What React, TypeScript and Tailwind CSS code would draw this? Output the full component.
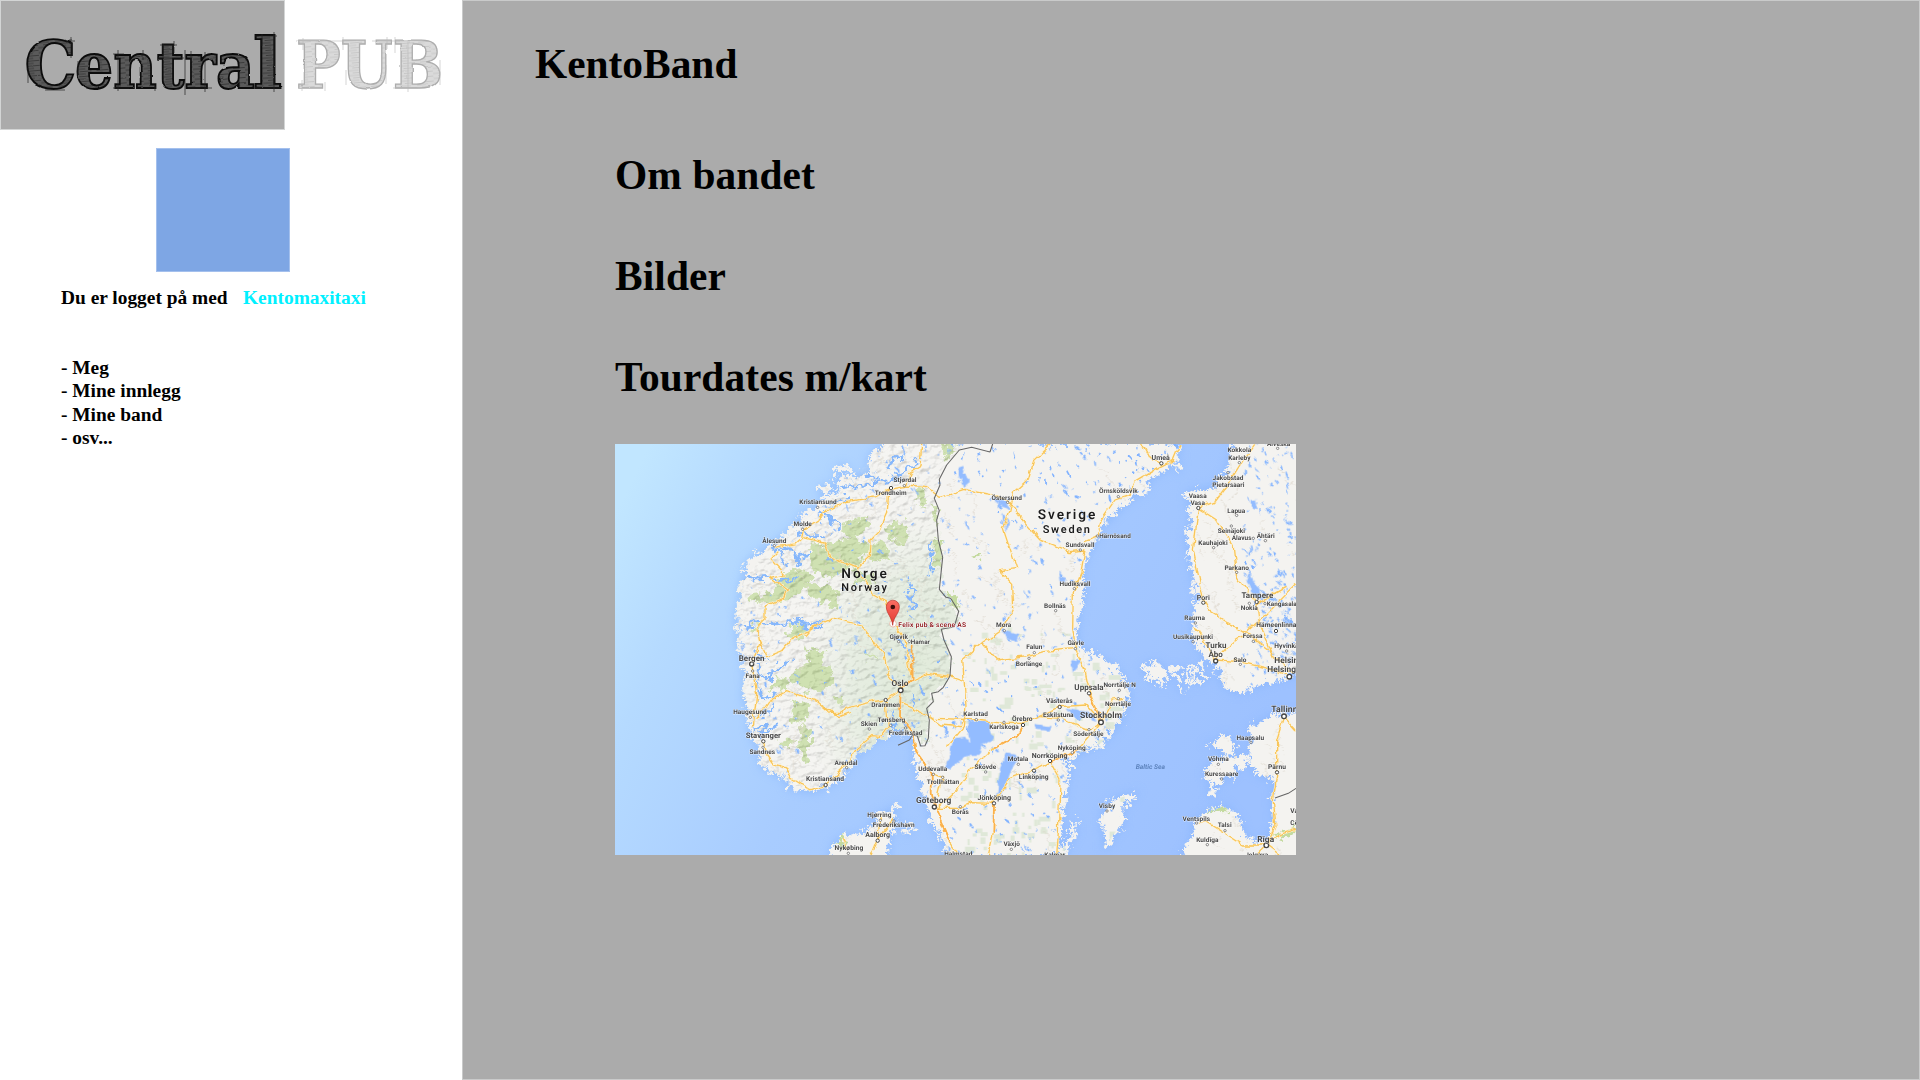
type Label = [number, number, string, number?, ("start" | "end")?];

const land = [
  // Norway and Sweden
  "M822 12 L795 35 L775 65 L795 92 L745 108 L705 148 L655 172 L620 205 L575 228 L555 262 L525 290 L480 318 L440 345 L412 370 L406 402 L392 440 L394 480 L380 520 L384 570 L388 610 L398 640 L408 700 L404 780 L420 810 L420 860 L434 900 L450 930 L454 975 L500 1003 L540 1020 L532 1040 L570 1048 L610 1054 L650 1037 L690 1012 L715 980 L740 945 L780 912 L800 892 L835 885 L853 868 L850 820 L865 812 L872 870 L905 880 L915 920 L918 970 L930 1010 L945 1060 L958 1100 L965 1140 L985 1175 L1005 1210 L1012 1245 L1338 1245 L1345 1210 L1352 1160 L1355 1100 L1367 1030 L1378 975 L1340 962 L1400 945 L1432 925 L1465 915 L1495 890 L1528 850 L1545 800 L1560 765 L1540 720 L1515 680 L1475 660 L1445 640 L1405 628 L1398 590 L1405 510 L1425 450 L1412 400 L1428 350 L1455 300 L1470 262 L1500 235 L1530 205 L1565 172 L1605 150 L1620 115 L1660 92 L1690 65 L1705 30 L1712 12 Z",
  // Finland
  "M1872 12 L1862 60 L1845 105 L1812 145 L1770 150 L1735 160 L1738 195 L1750 235 L1730 285 L1742 350 L1750 410 L1765 470 L1752 540 L1750 585 L1762 615 L1795 655 L1830 690 L1835 730 L1880 758 L1930 742 L1990 718 L2075 700 L2075 0 L1872 0 Z",
  // Estonia and Latvia
  "M2075 825 L2010 822 L1965 840 L1920 865 L1925 905 L1920 965 L1940 1000 L1975 1015 L1998 1000 L1990 1080 L1997 1150 L1970 1200 L1930 1208 L1900 1185 L1888 1145 L1845 1096 L1795 1118 L1752 1148 L1748 1195 L1718 1245 L1718 1260 L2075 1260 Z",
  // Denmark
  "M862 1095 L846 1128 L855 1150 L840 1180 L832 1215 L835 1260 L662 1260 L672 1215 L700 1192 L750 1190 L778 1170 L800 1128 L832 1118 Z",
  "M885 1158 L902 1162 L892 1178 Z",
  // islands
  "M1575 1060 L1548 1068 L1510 1080 L1480 1115 L1478 1160 L1490 1190 L1482 1220 L1498 1216 L1505 1190 L1538 1150 L1532 1110 L1556 1085 Z",
  "M1392 1155 L1396 1175 L1372 1222 L1355 1260 L1342 1260 L1372 1200 Z",
  "M1800 912 L1830 905 L1848 885 L1858 905 L1882 915 L1865 930 L1848 948 L1835 922 Z",
  "M1790 988 L1815 965 L1855 955 L1885 945 L1908 960 L1895 975 L1870 982 L1868 1005 L1835 1018 L1815 1038 L1802 1070 L1798 1055 L1808 1022 L1788 1010 Z",
  "M1598 695 L1612 672 L1645 668 L1650 685 L1666 690 L1672 705 L1655 735 L1642 712 L1630 728 L1618 706 Z",
  "M1685 690 l14 -4 l4 8 Z M1700 715 l12 6 l-8 6 Z M1722 690 l10 -8 l6 10 Z M1735 712 l12 4 l-6 8 Z M1750 690 l10 6 l-8 6 Z M1708 750 l8 -4 l2 7 Z M1755 725 l14 -2 l-4 10 Z M1780 705 l14 4 l-6 10 Z M1775 670 l10 6 l-8 8 Z",
  "M670 128 L700 110 L722 112 L728 130 L690 145 Z",
  "M630 145 L650 137 L662 150 L642 165 Z",
  "M672 95 L700 76 L712 88 Z",
  "M1702 82 L1708 75 L1704 100 Z",
].join(" ");

const norway =
  "M822 12 L700 150 L480 320 L385 440 L372 560 L390 640 L400 780 L430 900 L452 975 L532 1030 L610 1054 L690 1012 L780 912 L853 868 L872 870 L905 880 L922 890 L935 918 L950 910 L958 830 L950 800 L968 785 L965 760 L1000 745 L1018 710 L1020 640 L993 570 L1048 555 L1046 515 L1010 472 L988 450 L998 355 L983 300 L988 210 L973 175 L990 130 L990 95 L1050 30 L1060 12 Z";

const border =
  "M1140 36 L1148 12 M1140 36 L1085 22 L1048 30 L1010 75 L988 118 L990 135 L973 175 L988 212 L980 240 L985 300 L998 352 L988 448 L1008 472 L1022 475 L1046 514 L1033 560 L994 568 L1002 600 L1024 650 L1020 708 L1000 742 L985 755 L965 760 L970 785 L950 805 L958 840 L955 895 L945 917 L932 918 L922 888 L908 885 L898 900 L864 916";

const forests = [
  "M822 265 L880 240 L905 285 L870 318 L835 290 Z",
  "M920 150 L945 145 L948 195 L925 200 Z",
  "M990 15 L1045 12 L1010 70 Z",
  "M975 290 L995 310 L992 375 L972 385 Z",
  "M965 190 L980 200 L980 260 L968 240 Z",
  "M700 245 L775 230 L775 265 L725 298 L700 275 Z",
  "M605 310 L650 315 L690 300 L740 290 L775 330 L740 380 L700 400 L650 415 L600 370 Z",
  "M770 315 L830 305 L835 355 L780 365 Z",
  "M725 385 L795 410 L790 430 L740 430 Z",
  "M520 400 L580 390 L610 410 L575 450 L510 490 L475 485 Z",
  "M590 425 L650 430 L690 465 L680 505 L640 480 L600 485 Z",
  "M420 465 L500 460 L495 482 L430 490 Z",
  "M550 555 L600 560 L590 590 L525 595 Z",
  "M415 560 L450 555 L430 580 Z",
  "M590 625 L640 635 L635 670 L670 690 L665 735 L620 755 L570 750 L540 700 L600 665 Z",
  "M500 715 L540 720 L520 755 L480 745 Z",
  "M545 785 L600 800 L590 840 L545 850 Z",
  "M570 850 L600 870 L600 920 L590 965 L572 960 L575 900 Z",
  "M505 905 L560 895 L545 920 L500 925 Z",
  "M670 775 L705 770 L695 795 Z",
  "M760 640 L800 650 L795 665 Z",
  "M1010 455 L1040 475 L1042 500 L1018 485 Z",
  "M1795 1115 L1845 1096 L1852 1120 L1825 1118 Z",
  "M1990 1190 L2058 1160 L2058 1180 L2010 1200 Z",
  "M672 1210 L705 1190 L700 1215 Z",
  "M1090 345 L1115 340 L1105 360 Z",
  "M1010 15 L1040 20 L1000 60 Z",
];

const fjords =
  "M400 555 L440 548 L500 552 L540 545 L600 560 L640 550 M540 548 L580 530 M400 415 L480 412 L520 425 L560 415 M480 325 L540 320 L560 360 L565 380 M510 330 L530 380 M560 265 L600 290 L640 290 M640 220 L680 250 L690 270 M650 200 L720 175 M700 150 L790 130 L860 115 L930 60 M800 120 L770 105 M830 75 L880 50 M440 680 L470 720 L500 690 L540 660 M440 720 L450 780 L490 760 M430 860 L480 870 L510 850 M440 830 L500 800 M545 350 L600 340 M965 310 L960 400 M905 430 L915 510 M440 640 L470 660 M850 580 L900 640 M855 810 L850 870 M905 760 L912 800";

const roads = [
  "M935 12 L930 80 L900 100 L885 140 L845 148 L800 170 L710 185 L655 210 L625 240 L580 270 L575 295 L555 312 L495 322",
  "M885 138 L945 142 L990 172 L1065 148 L1150 165 L1195 178 L1240 245 L1290 300 L1380 335 L1425 330 L1412 400 L1390 460 L1388 560 L1396 625",
  "M835 165 L832 215 L805 275 L780 300 L778 350 L740 385 L660 350 L645 310 L580 292",
  "M740 385 L780 440 L790 465 L825 485 L848 545 L885 600 L905 720",
  "M505 335 L482 358 L525 405 L485 415 L530 450 L520 475 L465 500 L465 535 L440 560 L450 610 L425 670",
  "M582 590 L605 563 L670 535 L750 555 L820 640 L835 700 L870 745",
  "M450 605 L470 650 L520 630 L545 600 L620 560",
  "M425 672 L440 760 L430 860",
  "M440 840 L480 780 L530 752 L620 785 L660 820 L695 820 L705 805 L790 785 L830 780 L872 750 L905 720 L950 700 L1030 710 L1060 720",
  "M460 905 L470 940 L495 975 L530 985 L545 1015 L605 1052 L645 1035 L710 975 L740 925 L785 890 L812 892 L835 860 L828 782",
  "M872 750 L870 830 L912 880 L915 930 L965 1000 L965 1060 L975 1100 L1020 1210 L1045 1245",
  "M875 790 L945 820 L995 855 L1050 860 L1060 840",
  "M720 818 L690 830 L640 800",
  "M1710 12 L1690 60 L1650 80 L1575 125 L1560 165 L1515 180 L1480 230 L1460 290 L1425 305",
  "M1325 12 L1270 65 L1255 120 L1210 160 L1200 215 L1180 265 L1220 385 L1170 393 L1205 430 L1208 510 L1180 565 L1120 605 L1058 660 L1068 800 L1060 860 L1010 920",
  "M1115 610 L1160 660 L1250 650 L1300 635 L1396 625 L1425 690 L1440 760 L1472 840",
  "M980 835 L1100 840 L1180 850 L1240 850 L1300 825 L1350 800 L1430 795 L1475 845 L1435 870 L1380 850 L1350 835 L1290 830",
  "M1240 855 L1225 885 L1150 925 L1080 990 L1040 1050 L975 1110",
  "M975 1105 L1050 1105 L1085 1088 L1150 1090 L1200 1015 L1270 990 L1320 962 L1400 930 L1475 845",
  "M1152 1090 L1150 1180 L1135 1245",
  "M1320 965 L1350 1020 L1345 1180 L1340 1245",
  "M1540 775 L1510 780 L1475 845",
  "M970 1000 L1000 1010 L985 1070",
  "M1935 12 L1900 60 L1860 125 L1815 185 L1765 205 L1750 330 L1780 480 L1800 515 L1905 580 L1960 530 L2058 430",
  "M1765 205 L1820 240 L1870 320 L1880 410 L1940 490 L2030 440",
  "M1940 485 L1950 560 L1990 650 L2050 700",
  "M1755 560 L1790 610 L1815 660 L1890 665 L1975 685 L2045 710",
  "M1905 585 L1850 620 L1820 655",
  "M1910 580 L1990 640",
  "M2022 830 L2000 900 L2000 1010 L1990 1080 L1998 1160 L1975 1215",
  "M1765 1150 L1790 1145 L1845 1180 L1900 1215 L1970 1215 L2010 1180 L2058 1165",
  "M1970 1215 L2010 1245 M1970 1215 L1940 1245",
  "M2022 830 L2058 870",
  "M700 1195 L715 1230 M803 1200 L850 1140 M803 1200 L785 1245 M803 1200 L812 1120",
  "M1595 12 L1615 50 L1655 68",
];

const labels: Label[] = [
  [885, 127, "Stjørdal"], [842, 165, "Trondheim"], [624, 192, "Kristiansund"], [578, 259, "Molde"], [493, 308, "Ålesund"],
  [866, 596, "Gjøvik"], [902, 611, "Hamar", 19, "start"], [425, 662, "Bergen", 24], [428, 713, "Fana"], [870, 738, "Oslo", 25],
  [827, 802, "Drammen"], [844, 847, "Tønsberg"], [777, 858, "Skien"], [887, 885, "Fredrikstad"], [420, 823, "Haugesund"],
  [460, 893, "Stavanger", 23], [457, 942, "Sandnes"], [708, 976, "Arendal"], [645, 1022, "Kristiansand", 20], [968, 993, "Uddevalla"],
  [999, 1033, "Trollhättan"], [971, 1088, "Göteborg", 25], [808, 1131, "Hjørring"], [851, 1162, "Frederikshavn"], [803, 1190, "Aalborg", 21], [717, 1230, "Nykøbing", 20],
  [1652, 61, "Umeå", 21], [1525, 160, "Örnsköldsvik"], [1190, 179, "Östersund"], [1468, 294, "Härnösand", 19, "start"], [1410, 321, "Sundsvall"],
  [1395, 438, "Hudiksvall"], [1335, 503, "Bollnäs"], [1181, 562, "Mora"], [1397, 616, "Gävle"], [1273, 628, "Falun"], [1257, 677, "Borlänge"],
  [1437, 750, "Uppsala", 24], [1529, 742, "Norrtälje N"], [1524, 797, "Norrtälje"], [1348, 790, "Västerås", 20], [1345, 831, "Eskilstuna"],
  [1473, 834, "Stockholm", 26], [1435, 889, "Södertälje"], [1097, 829, "Karlstad"], [1237, 844, "Örebro", 20], [1182, 867, "Karlskoga"], [1385, 931, "Nyköping"],
  [1224, 964, "Motala"], [1319, 955, "Norrköping", 21], [1271, 1016, "Linköping", 20], [1126, 988, "Skövde"], [1153, 1079, "Jönköping", 21],
  [1051, 1121, "Borås"], [1205, 1219, "Växjö"], [1045, 1249, "Halmstad"], [1334, 1251, "Kalmar"], [1491, 1105, "Visby"],
  [2006, 18, "Alveska"], [1888, 37, "Kokkola"], [1888, 60, "Karleby"], [1854, 119, "Jakobstad"], [1855, 141, "Pietarsaari"],
  [1763, 173, "Vaasa"], [1763, 195, "Vasa"], [1879, 218, "Lapua"], [1864, 279, "Seinäjoki"], [1895, 301, "Alavus"], [1967, 294, "Ähtäri"],
  [1809, 315, "Kauhajoki"], [1880, 389, "Parkano"], [1780, 479, "Pori", 21], [1942, 474, "Tampere", 24], [1918, 511, "Nokia"], [1970, 498, "Kangasala", 19, "start"],
  [1754, 541, "Rauma"], [1749, 597, "Uusikaupunki"], [1999, 561, "Hämeenlinna", 20], [1928, 595, "Forssa"], [1818, 624, "Turku", 24], [1817, 651, "Åbo", 24],
  [1993, 624, "Hyvinkää", 20, "start"], [1890, 666, "Salo"], [1993, 668, "Helsinki", 25, "start"], [1972, 697, "Helsingfors", 25, "start"],
  [1984, 816, "Tallinn", 26, "start"], [1921, 900, "Haapsalu"], [1825, 964, "Võhma"], [1835, 1009, "Kuressaare"], [2001, 988, "Pärnu", 20],
  [1759, 1142, "Ventspils"], [1844, 1162, "Talsi"], [1792, 1206, "Kuldīga"], [1967, 1205, "Rīga", 25], [1940, 1251, "Jelgava"],
  [2041, 1120, "Valmiera", 20, "start"], [2041, 1154, "Cēsis", 20, "start"],
];

const towns: [number, number, number?][] = [
  [883, 137], [843, 144, 5], [623, 202], [578, 268], [493, 317], [866, 605], [898, 604], [425, 672, 6], [428, 693], [872, 751, 7],
  [827, 780, 5], [842, 856], [778, 867], [887, 864], [421, 832], [460, 904, 5], [459, 922], [710, 983], [647, 1035, 5], [970, 1003], [998, 1012],
  [973, 1101, 6], [811, 1141], [852, 1143], [803, 1202, 5], [715, 1240], [1654, 70, 5], [1525, 170], [1193, 187], [1462, 288], [1411, 330], [1393, 446],
  [1337, 512], [1183, 572], [1396, 626], [1273, 638], [1257, 655], [1437, 760, 5], [1528, 751], [1525, 776], [1349, 801, 5], [1345, 840], [1473, 847, 7],
  [1437, 869], [1099, 839], [1239, 855, 5], [1182, 847], [1387, 938], [1225, 973], [1320, 963, 5], [1272, 992, 5], [1127, 996], [1152, 1090, 5],
  [1051, 1100], [1204, 1228], [1491, 1113], [2003, 25], [1888, 68], [1854, 98], [1765, 204, 5], [1880, 226], [1864, 258], [1930, 295], [1966, 302],
  [1811, 323], [1880, 397], [1780, 488, 5], [1940, 486, 5], [1918, 490], [1965, 491], [1756, 549], [1749, 605], [1998, 573, 5], [1930, 604], [1817, 663, 6],
  [1891, 673], [2030, 633], [2038, 710, 7], [2022, 829, 7], [1923, 907], [1825, 973], [1835, 1017], [2001, 997, 5], [1760, 1149], [1845, 1172], [1792, 1214], [1969, 1216, 7],
];

function scatter(seed: number, count: number, box: [number, number, number, number]) {
  let s = seed;
  const next = () => (s = (s * 16807) % 2147483647) / 2147483647;
  return Array.from({ length: count }, () => ({
    x: box[0] + next() * box[2],
    y: box[1] + next() * box[3],
    a: 2 + next() * next() * 12,
    b: 1.2 + next() * 2.6,
    r: 35 + next() * 50,
  }));
}

const lakes = [
  ...scatter(71, 620, [1000, 12, 720, 1233]),
  ...scatter(913, 260, [380, 12, 640, 1040]),
  ...scatter(4231, 150, [1900, 12, 158, 730]),
  ...scatter(77, 90, [1940, 400, 118, 300]),
];
const fields = scatter(553, 190, [1050, 560, 520, 685]);
const trails = scatter(87, 170, [400, 12, 1650, 1230]);

function TourMap() {
  return (
    <svg className="block h-[411px] w-[681px]" viewBox="15 12 2043 1233" preserveAspectRatio="none" textRendering="geometricPrecision" role="img" aria-label="Tourkart">
      <defs>
        <linearGradient id="sea" x1="0" y1="0.2" x2="1" y2="0.5">
          <stop offset="0" stopColor="#c1e6ff" />
          <stop offset="0.15" stopColor="#b5daff" />
          <stop offset="0.42" stopColor="#a8ccff" />
          <stop offset="1" stopColor="#9dc1ff" />
        </linearGradient>
        <filter id="coast" x="-5%" y="-5%" width="110%" height="110%" colorInterpolationFilters="sRGB">
          <feTurbulence type="fractalNoise" baseFrequency="0.045" numOctaves="4" seed="4" />
          <feDisplacementMap in="SourceGraphic" scale="48" xChannelSelector="R" yChannelSelector="G" />
        </filter>
        <filter id="wiggle" x="-5%" y="-5%" width="110%" height="110%" colorInterpolationFilters="sRGB">
          <feTurbulence type="fractalNoise" baseFrequency="0.03" numOctaves="3" seed="8" />
          <feDisplacementMap in="SourceGraphic" scale="20" xChannelSelector="R" yChannelSelector="G" />
        </filter>
        <filter id="relief" x="0" y="0" width="100%" height="100%" colorInterpolationFilters="sRGB">
          <feTurbulence type="fractalNoise" baseFrequency="0.04 0.055" numOctaves="4" seed="12" result="n" />
          <feDiffuseLighting in="n" surfaceScale="9" diffuseConstant="1.2" lightingColor="#ffffff" result="lit">
            <feDistantLight azimuth="225" elevation="58" />
          </feDiffuseLighting>
          <feComposite in="lit" in2="SourceGraphic" operator="in" />
        </filter>
        <filter id="glow" x="-10%" y="-10%" width="120%" height="120%">
          <feGaussianBlur stdDeviation="14" />
        </filter>
        <radialGradient id="tint" cx="0.8" cy="0.68" r="0.5">
          <stop offset="0" stopColor="#d9e6d1" />
          <stop offset="0.55" stopColor="#dee8d8" stopOpacity="0.9" />
          <stop offset="1" stopColor="#e8ede2" stopOpacity="0.1" />
        </radialGradient>
        <clipPath id="landClip">
          <path d={land} />
        </clipPath>
        <linearGradient id="pin" x1="0" y1="0" x2="0" y2="1">
          <stop offset="0" stopColor="#fb6d62" />
          <stop offset="1" stopColor="#e33b32" />
        </linearGradient>
      </defs>
      <rect x="0" y="0" width="2080" height="1260" fill="url(#sea)" />
      <path d={land} fill="#85b3fb" stroke="#85b3fb" strokeWidth="12" opacity="0.6" filter="url(#glow)" />
      <g filter="url(#coast)">
        <path d={land} fill="none" stroke="#f4f3f0" strokeWidth="16" strokeDasharray="7 9" />
        <path d={land} fill="#f4f3f0" />
        <path d={norway} fill="url(#tint)" />
        <path d={forests.join(" ")} fill="#c4da9f" />
      </g>
      <g clipPath="url(#landClip)">
        <path d={norway} filter="url(#relief)" opacity="0.2" style={{ mixBlendMode: "multiply" }} />
        <g fill="#dfe8d8">
          {fields.map((f, i) => (
            <rect key={i} x={f.x} y={f.y} width={f.a * 3} height={f.b * 6} />
          ))}
        </g>
        <g fill="none" stroke="#ddd6cb" strokeWidth="2" filter="url(#coast)">
          {trails.map((t, i) => (
            <path key={i} d={`M${t.x} ${t.y} l${t.a * 9 - 25} ${t.b * 18} l${t.r - 55} ${t.a * 6}`} />
          ))}
        </g>
        <g fill="#80b2ff" filter="url(#wiggle)">
          {lakes.map((l, i) => (
            <ellipse key={i} cx={l.x} cy={l.y} rx={l.a} ry={l.b} transform={`rotate(${l.r} ${l.x} ${l.y})`} />
          ))}
        </g>
      </g>
      <g filter="url(#wiggle)" fill="#93bcff">
        <path d="M1072 850 L1090 845 L1140 842 L1142 870 L1150 895 L1120 915 L1105 945 L1070 945 L1045 965 L1020 990 L1005 985 L1020 940 L1030 895 L1065 890 L1078 912 Z" />
        <path d="M1190 940 L1218 945 L1222 965 L1200 1000 L1185 1045 L1160 1080 L1165 1020 L1178 970 Z" />
        <path d="M1270 855 L1325 862 L1320 872 L1280 870 Z M1365 805 L1400 812 L1440 815 L1460 840 L1430 830 L1400 835 L1380 815 Z" />
        <path d="M1045 80 L1060 75 L1065 110 L1080 125 L1062 140 L1050 110 Z M1150 175 L1190 180 L1200 210 L1170 200 Z M1180 220 L1195 240 L1190 275 L1182 250 Z M1180 570 L1225 585 L1220 605 L1190 595 Z M1925 180 L1942 178 L1940 210 L1925 208 Z M1350 410 L1370 415 L1368 428 L1352 425 Z M1920 400 L1935 430 L1955 450 L1940 480 L1925 450 L1910 425 Z M1380 660 L1415 665 L1385 700 Z" />
      </g>
      <path d={fjords} fill="none" stroke="#86b7fb" strokeWidth="8" strokeLinejoin="round" filter="url(#coast)" />
      <g fill="none" strokeLinejoin="round" filter="url(#wiggle)">
        <path d={roads.join(" ")} stroke="#fff3d3" strokeWidth="7" />
        <path d={roads.join(" ")} stroke="#f8c55a" strokeWidth="3.8" />
        <path d="M872 750 L870 830 L912 880 L915 930 L965 1000 L965 1060 L975 1100 L1020 1210 M905 620 L905 720 L872 750 M1437 760 L1472 840 M1320 965 L1400 930 M1152 1090 L1150 1180 M1240 855 L1225 885 L1150 925" stroke="#fbb04c" strokeWidth="5" />
      </g>
      <path d={border} fill="none" stroke="#666" strokeWidth="3.2" strokeLinejoin="round" />
      <path d="M2058 1045 L2035 1060 L1995 1074" fill="none" stroke="#666" strokeWidth="3.2" />
      <g fill="#fff" stroke="#444">
        {towns.map(([x, y, r], i) => (
          <circle key={i} cx={x} cy={y} r={r ?? 3.6} strokeWidth={r ? (r > 5 ? 4 : 3) : 1.8} />
        ))}
      </g>
      <g fontFamily="Roboto, sans-serif" textAnchor="middle" stroke="#fff" strokeOpacity="0.6" strokeWidth="3" paintOrder="stroke">
        {labels.map(([x, y, text, size, anchor], i) => (
          <text key={i} x={x} y={y} fontSize={size ?? 19.5} textAnchor={anchor ?? "middle"} className="fill-[#484848]">
            {text}
          </text>
        ))}
        <g fill="#1c1c1c" fontWeight="600">
          <text x="694" y="413" fontSize="41" textAnchor="start" textLength="137">Norge</text>
          <text x="694" y="453" fontSize="33" textAnchor="start" textLength="137">Norway</text>
          <text x="1283" y="238" fontSize="41" textAnchor="start" textLength="173">Sverige</text>
          <text x="1298" y="279" fontSize="33" textAnchor="start" textLength="142">Sweden</text>
        </g>
      </g>
      <text x="1577" y="987" fontFamily="Roboto, sans-serif" fontStyle="italic" fontSize="20" textLength="88" fill="#5d83bd">Baltic Sea</text>
      <text x="865" y="560" fontFamily="Roboto, sans-serif" fontWeight="600" fontSize="20" textLength="203" fill="#8c1116" stroke="#fff" strokeWidth="3" strokeOpacity="0.8" paintOrder="stroke">
        Felix pub &amp; scene AS
      </text>
      <circle cx="849" cy="551" r="10" fill="#fff" stroke="#e9a48f" strokeWidth="2" />
      <path d="M848 556 C846 530 829 522 829 500 A19.500 19.500 0 0 1 868 500 C868 522 850 530 848 556 Z" fill="url(#pin)" stroke="#b5322a" strokeWidth="2" />
      <circle cx="848.500" cy="501" r="7" fill="#3d0d0b" />
    </svg>
  );
}

function Logo() {
  return (
    <svg className="block h-[130px] w-[460px]" viewBox="0 0 460 130" role="img" aria-label="Central PUB">
      <defs>
        <pattern id="hatchDark" width="17" height="5" patternUnits="userSpaceOnUse" patternTransform="rotate(-5)">
          <rect width="17" height="5" fill="#5a5a5a" />
          <path d="M0 1 H11 M5 3.500 H17" stroke="#383838" strokeWidth="0.900" />
        </pattern>
        <pattern id="hatchLight" width="17" height="5" patternUnits="userSpaceOnUse" patternTransform="rotate(-5)">
          <rect width="17" height="5" fill="#dadada" />
          <path d="M0 1 H11 M5 3.500 H17" stroke="#c6c6c6" strokeWidth="0.900" />
        </pattern>
        <filter id="pencil" x="-5%" y="-10%" width="110%" height="120%" colorInterpolationFilters="sRGB">
          <feTurbulence type="fractalNoise" baseFrequency="0.11" numOctaves="2" seed="3" />
          <feDisplacementMap in="SourceGraphic" scale="2" xChannelSelector="R" yChannelSelector="G" />
        </filter>
      </defs>
      <g filter="url(#pencil)" fontFamily="'DejaVu Serif', serif" fontWeight="bold">
        <g fill="url(#hatchDark)" stroke="#0c0c0c" strokeWidth="1.900">
          <text x="24.500" y="88" fontSize="66" textLength="52" lengthAdjust="spacingAndGlyphs">C</text>
          <text x="75" y="88" fontSize="63" textLength="180" lengthAdjust="spacingAndGlyphs">entra</text>
          <text x="253" y="88" fontSize="69" textLength="29" lengthAdjust="spacingAndGlyphs">l</text>
        </g>
        <text x="296" y="88" fontSize="65" textLength="147" lengthAdjust="spacingAndGlyphs" fill="url(#hatchLight)" stroke="#adadad" strokeWidth="1.400">PUB</text>
        <path d="M28 68 V83 M71 37 V58 M66 41 H75 M78 61 V78 M118 50 V91 M113 54 H124 M143 50 V60 M155 86 V91 M163 44 V58 M174 41 V53 M160 45 H177 M185 50 V95 M157 58 H184 M191 51 V62 M205 52 V92 M255 36 H277 M262 34 V46 M274 32 V92 M254 88 H282 M45 90 H65 M113 88 H130 M188 88 H212" fill="none" stroke="#222" strokeWidth="0.700" />
        <path d="M296 41 H345 M303 38 V50 M302 80 V91 M325 82 V91 M343 37 V50 M387 37 V50 M372 41 H400 M395 37 V53 M408 39 V92 M393 88 H418 M440 60 V85 M346 70 V85 M386 65 V84" fill="none" stroke="#bbb" strokeWidth="0.600" />
      </g>
    </svg>
  );
}

const menu = ["Meg", "Mine innlegg", "Mine band", "osv..."];

export default function App() {
  return (
    <div className="flex h-[1080px] w-[1920px] overflow-hidden bg-white font-['Liberation_Serif',serif] font-bold text-black">
      <aside className="flex w-[462px] shrink-0 flex-col">
        <header className="h-[130px] w-[285px] border border-[#d3d5d5] bg-[#ababab]">
          <div className="-mt-px -ml-px w-[460px]">
            <Logo />
          </div>
        </header>
        <div className="mt-[18px] ml-[156px] h-[124px] w-[134px] border border-[#a4c0ed] bg-[#7ea6e4]" />
        <div className="mt-[14px] ml-[61px] flex h-6 text-[19.4px] leading-6 whitespace-nowrap">
          <span className="w-[182px]">Du er logget på med</span>
          <a className="text-[#00f0ff]">Kentomaxitaxi</a>
        </div>
        <nav className="mt-[46px] ml-[61px] text-[19.4px] leading-[23.4px]">
          <ul>
            {menu.map((item) => (
              <li key={item}>- {item}</li>
            ))}
          </ul>
        </nav>
      </aside>
      <main className="flex flex-1 flex-col border border-[#c9caca] bg-[#ababab] pt-[39px] text-[41.4px] leading-[48px]">
        <h1 className="ml-[72px]">KentoBand</h1>
        <div className="mt-[63px] ml-[152px] flex flex-col tracking-[0.12px]">
          <h2>Om bandet</h2>
          <h2 className="mt-[53px]">Bilder</h2>
          <h2 className="mt-[53px]">Tourdates m/kart</h2>
          <div className="mt-[43px]">
            <TourMap />
          </div>
        </div>
      </main>
    </div>
  );
}
